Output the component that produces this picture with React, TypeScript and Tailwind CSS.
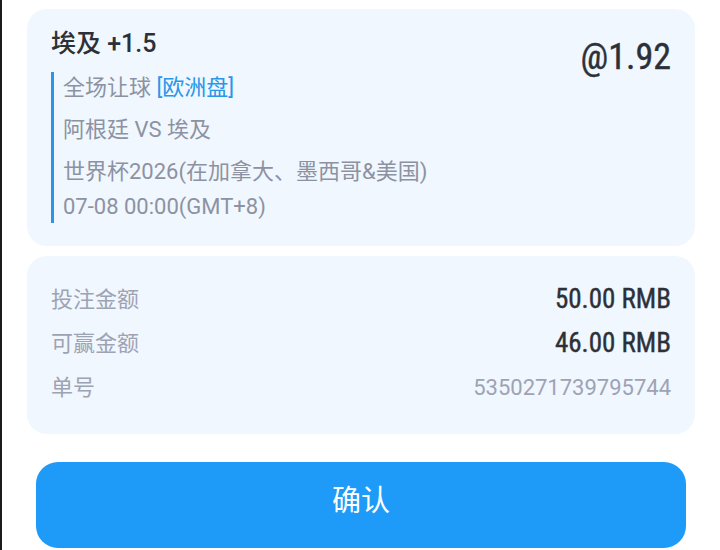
const numFont = "font-['Roboto_Condensed','Liberation_Sans_Narrow','DejaVu_Sans_Condensed',Roboto,sans-serif] font-normal [-webkit-text-stroke:0.4px_#2c3038]";

const rows = [
  { label: "投注金额", value: "50.00 RMB", strong: true },
  { label: "可赢金额", value: "46.00 RMB", strong: true },
  { label: "单号", value: "5350271739795744", strong: false },
];

export default function App() {
  return (
    <div className="w-[720px] h-[550px] overflow-hidden bg-white border-l-2 border-[#1c1c1c] font-['Roboto','Noto_Sans_CJK_SC',sans-serif]">
      {/* Bet selection card */}
      <div className="mt-[9px] ml-[25px] mr-[25px] h-[237px] rounded-[20px] bg-[#f0f7fe] pt-[21px] pl-[24px] pr-[24px]">
        <div className="flex justify-between items-start">
          <div>
            <div className="h-[28px] leading-[28px] text-[25px] font-medium text-[#2c3038]">埃及 +1.5</div>
            <div className="mt-[14px] border-l-[3px] border-[#2a96e8] pl-[9px] text-[22px] text-[#8d92a2]">
              <div className="h-[32px] leading-[32px]">
                全场让球 <span className="text-[#2a96e8]">[欧洲盘]</span>
              </div>
              <div className="mt-[10px] h-[32px] leading-[32px]">阿根廷 VS 埃及</div>
              <div className="mt-[10px] h-[32px] leading-[32px]">世界杯2026(在加拿大、墨西哥&amp;美国)</div>
              <div className="mt-[3px] h-[32px] leading-[32px]">07-08 00:00(GMT+8)</div>
            </div>
          </div>
          <div className={`mt-[7px] h-[40px] leading-[40px] text-[36px] text-[#2c3038] ${numFont}`}>@1.92</div>
        </div>
      </div>

      {/* Amount card */}
      <div className="mt-[10px] ml-[25px] mr-[25px] h-[178px] rounded-[20px] bg-[#f0f7fe] pt-[21px] px-[24px]">
        {rows.map((r) => (
          <div key={r.label} className="flex justify-between items-center h-[44px]">
            <span className="text-[22px] text-[#9ea3b4]">{r.label}</span>
            {r.strong ? (
              <span className={`text-[27px] text-[#2c3038] ${numFont}`}>{r.value}</span>
            ) : (
              <span className="text-[22px] text-[#9ea3b4]">{r.value}</span>
            )}
          </div>
        ))}
      </div>

      <button
        type="button"
        className="mt-[28px] ml-[34px] w-[650px] h-[86px] rounded-[22px] bg-[#1e9bf8] pb-[6px] text-[29px] text-white"
      >
        确认
      </button>
    </div>
  );
}
